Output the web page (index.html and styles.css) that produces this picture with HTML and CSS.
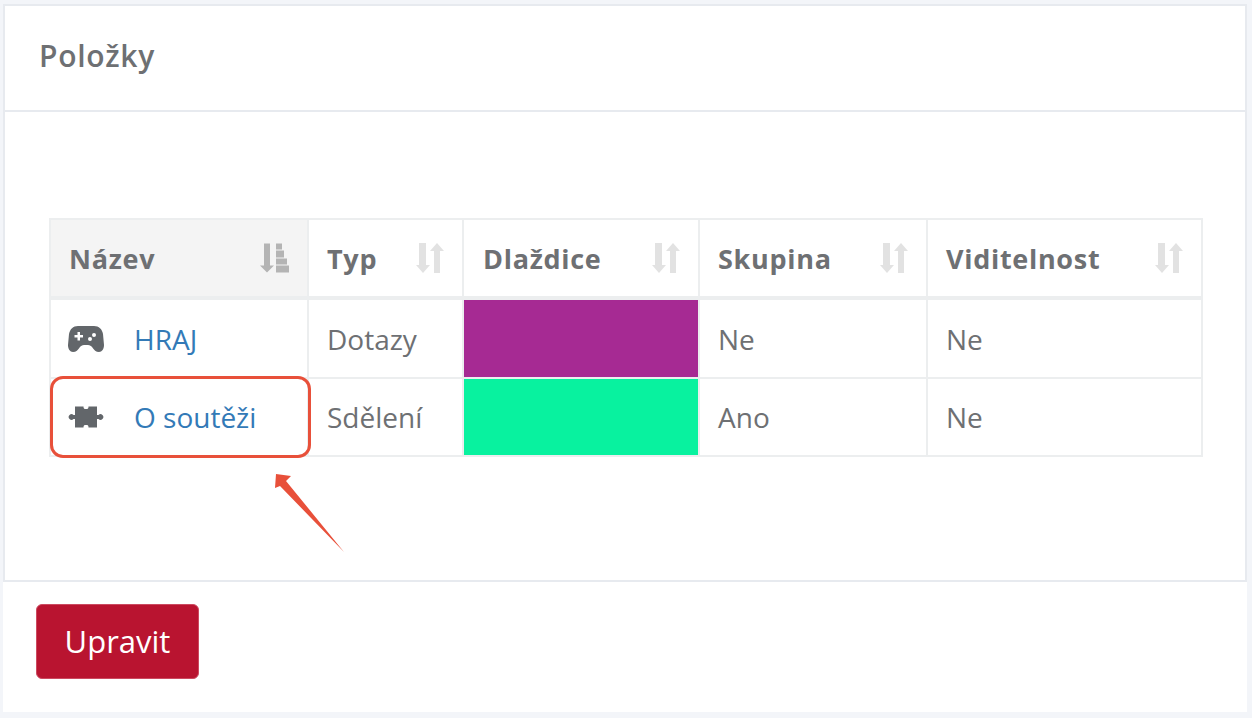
FILE: index.html
```html
<!DOCTYPE html>
<html lang="cs">
<head>
    <meta charset="UTF-8">
    <meta name="viewport" content="width=device-width, initial-scale=1.0">
    <title>Položky</title>
    <link rel="stylesheet" href="styles.css">
</head>
<body>
    <svg class="icon-defs" width="0" height="0">
        <symbol id="sort-both" viewBox="0 0 28 30">
            <path d="M3 0h7v22h4l-7 8-7-8h3z"/>
            <path d="M21 0l7 8h-4v22h-6V8h-4z"/>
        </symbol>
        <symbol id="sort-asc" viewBox="0 0 29 29">
            <path d="M4 0h6v22h4l-7 7-7-7h4z"/>
            <path d="M16 0h6v6h-6zM16 7h8v7h-8zM16 15h11v6H16zM16 22h13v7H16z"/>
        </symbol>
    </svg>

    <div class="panel">
        <div class="card">
            <h2 class="card-title">Položky</h2>
            <div class="card-body">
                <table class="items">
                    <thead>
                        <tr>
                            <th class="col-name sorted">Název <svg class="sort sort-amount"><use href="#sort-asc"/></svg></th>
                            <th class="col-type">Typ <svg class="sort"><use href="#sort-both"/></svg></th>
                            <th class="col-tile">Dlaždice <svg class="sort"><use href="#sort-both"/></svg></th>
                            <th class="col-group">Skupina <svg class="sort"><use href="#sort-both"/></svg></th>
                            <th class="col-vis">Viditelnost <svg class="sort"><use href="#sort-both"/></svg></th>
                        </tr>
                    </thead>
                    <tbody>
                        <tr>
                            <td>
                                <div class="name">
                                    <svg class="item-icon" viewBox="0 0 36 26">
                                        <path fill-rule="evenodd" d="M10 0h16c5 0 8 3 9 8l1 11c0 4-2 7-5 7-3 0-5-2-7-5-1-1-2-2-4-2h-4c-2 0-3 1-4 2-2 3-4 5-7 5-3 0-5-3-5-7L1 8c1-5 4-8 9-8zM9.500 6v3h-3v2.500h3v3H12v-3h3V9h-3V6zm16.500 1a2 2 0 1 0 0 4 2 2 0 0 0 0-4zm-4 4a2 2 0 1 0 0 4 2 2 0 0 0 0-4z"/>
                                    </svg>
                                    <a href="#">HRAJ</a>
                                </div>
                            </td>
                            <td>Dotazy</td>
                            <td class="tile tile-purple"></td>
                            <td>Ne</td>
                            <td>Ne</td>
                        </tr>
                        <tr>
                            <td>
                                <div class="name">
                                    <svg class="item-icon" viewBox="0 -2.500 36 26">
                                        <path d="M7 0h8.500c0 2 .5 2.500 2.500 2.500s2.500-.5 2.500-2.500H29v8.500h1.500a2.800 2.800 0 1 1 0 4H29V21h-8.500c0-2-.5-2.500-2.500-2.500s-2.500.5-2.500 2.500H7v-8.500H5.500a2.800 2.800 0 1 1 0-4H7z"/>
                                    </svg>
                                    <a href="#">O soutěži</a>
                                </div>
                            </td>
                            <td>Sdělení</td>
                            <td class="tile tile-green"></td>
                            <td>Ano</td>
                            <td>Ne</td>
                        </tr>
                    </tbody>
                </table>
            </div>
        </div>
        <div class="card-footer">
            <button class="btn">Upravit</button>
        </div>
    </div>

    <!-- annotation drawn on top of the screenshot -->
    <div class="highlight"></div>
    <svg class="arrow" width="72" height="82" viewBox="0 0 72 82">
        <path d="M2 1L17 3 12 8 70 79 6 13 1 15z"/>
    </svg>
</body>
</html>
```

FILE: styles.css
```css
* {
    margin: 0;
    padding: 0;
    box-sizing: border-box;
}

body {
    font-family: 'Open Sans', sans-serif;
    background: #f3f5f9;
    color: #6e7073;
    height: 718px;
    overflow: hidden;
    padding: 4px 5px 0 3px;
    position: relative;
}

.icon-defs {
    display: block;
    height: 0;
}

.panel {
    background: white;
    height: 708px;
}

.card {
    border: 2px solid #e7eaef;
    height: 578px;
}

.card-title {
    height: 106px;
    padding: 0 34px;
    line-height: 100px;
    font-size: 30px;
    font-weight: 600;
    letter-spacing: 0.7px;
    border-bottom: 2px solid #e7eaef;
}

.card-body {
    padding: 106px 43px 0 44px;
}

.items {
    width: 1152px;
    table-layout: fixed;
    border-collapse: collapse;
    font-size: 28px;
}

.items th,
.items td {
    border: 2px solid #eceeef;
    text-align: left;
}

.items th {
    height: 79px;
    padding: 0 18px;
    font-size: 27px;
    font-weight: 700;
    position: relative;
    border-bottom-width: 4px;
    letter-spacing: 0.7px;
}

.items td {
    height: 78px;
    padding: 0 18px;
}

.items tbody tr:first-child td {
    height: 80px;
}

.sorted {
    background: #f4f4f4;
}

.col-name { width: 258px; }
.col-type { width: 155px; }
.col-tile { width: 236px; }
.col-group { width: 228px; }
.col-vis { width: 275px; }

.items .col-tile {
    padding-left: 19px;
}

.sort {
    position: absolute;
    right: 18px;
    top: 23px;
    width: 28px;
    height: 30px;
    fill: #e2e2e2;
}

.sorted .sort {
    fill: #b4b4b4;
}

.sort-amount {
    width: 29px;
}

.name {
    display: flex;
    align-items: center;
    gap: 30px;
    margin-left: -1px;
}

.item-icon {
    width: 36px;
    height: 26px;
    fill: #62666a;
    flex-shrink: 0;
}

.name a {
    color: #337ab7;
    text-decoration: none;
}

.tile-purple {
    background: #a62a93;
}

.tile-green {
    background: #08f29f;
}

.card-footer {
    padding: 22px 33px;
}

.btn {
    background: #b91430;
    color: white;
    border: 1px solid #cc4a60;
    border-radius: 6px;
    font-family: inherit;
    font-size: 31px;
    width: 163px;
    height: 75px;
    padding-bottom: 2px;
    cursor: pointer;
}

.highlight {
    position: absolute;
    left: 50px;
    top: 376px;
    width: 261px;
    height: 82px;
    border: 3px solid #e8503a;
    border-radius: 13px;
}

.arrow {
    position: absolute;
    left: 274px;
    top: 473px;
    fill: #e8503a;
}
```
